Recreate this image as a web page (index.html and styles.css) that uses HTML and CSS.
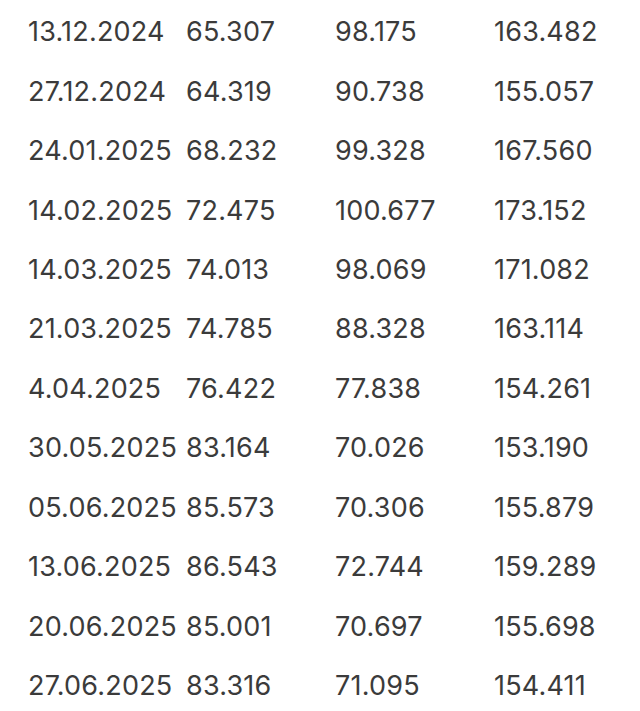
FILE: index.html
```html
<!DOCTYPE html>
<html>
<head>
<meta charset="utf-8">
<link rel="stylesheet" href="styles.css">
</head>
<body>
<div class="page">
<table class="data">
<tbody>
<tr><td>13.12.2024</td><td>65.307</td><td>98.175</td><td>163.482</td></tr>
<tr><td>27.12.2024</td><td>64.319</td><td>90.738</td><td>155.057</td></tr>
<tr><td>24.01.2025</td><td>68.232</td><td>99.328</td><td>167.560</td></tr>
<tr><td>14.02.2025</td><td>72.475</td><td>100.677</td><td>173.152</td></tr>
<tr><td>14.03.2025</td><td>74.013</td><td>98.069</td><td>171.082</td></tr>
<tr><td>21.03.2025</td><td>74.785</td><td>88.328</td><td>163.114</td></tr>
<tr><td>4.04.2025</td><td>76.422</td><td>77.838</td><td>154.261</td></tr>
<tr><td>30.05.2025</td><td>83.164</td><td>70.026</td><td>153.190</td></tr>
<tr><td>05.06.2025</td><td>85.573</td><td>70.306</td><td>155.879</td></tr>
<tr><td>13.06.2025</td><td>86.543</td><td>72.744</td><td>159.289</td></tr>
<tr><td>20.06.2025</td><td>85.001</td><td>70.697</td><td>155.698</td></tr>
<tr><td>27.06.2025</td><td>83.316</td><td>71.095</td><td>154.411</td></tr>
</tbody>
</table>
</div>
</body>
</html>
```
FILE: styles.css
```css
html, body {
  margin: 0;
  padding: 0;
  background: #ffffff;
}
.page {
  padding: 2px 0 0 28px;
}
.data {
  border-collapse: collapse;
  font-family: Inter, "Liberation Sans", sans-serif;
  font-size: 27px;
  color: #3b3b3b;
  letter-spacing: 0.2px;
}
.data td {
  padding: 0;
  height: 59.45px;
  vertical-align: middle;
  white-space: nowrap;
}
.data td:nth-child(1) { width: 158px; }
.data td:nth-child(2) { width: 149px; }
.data td:nth-child(3) { width: 159px; }
```
